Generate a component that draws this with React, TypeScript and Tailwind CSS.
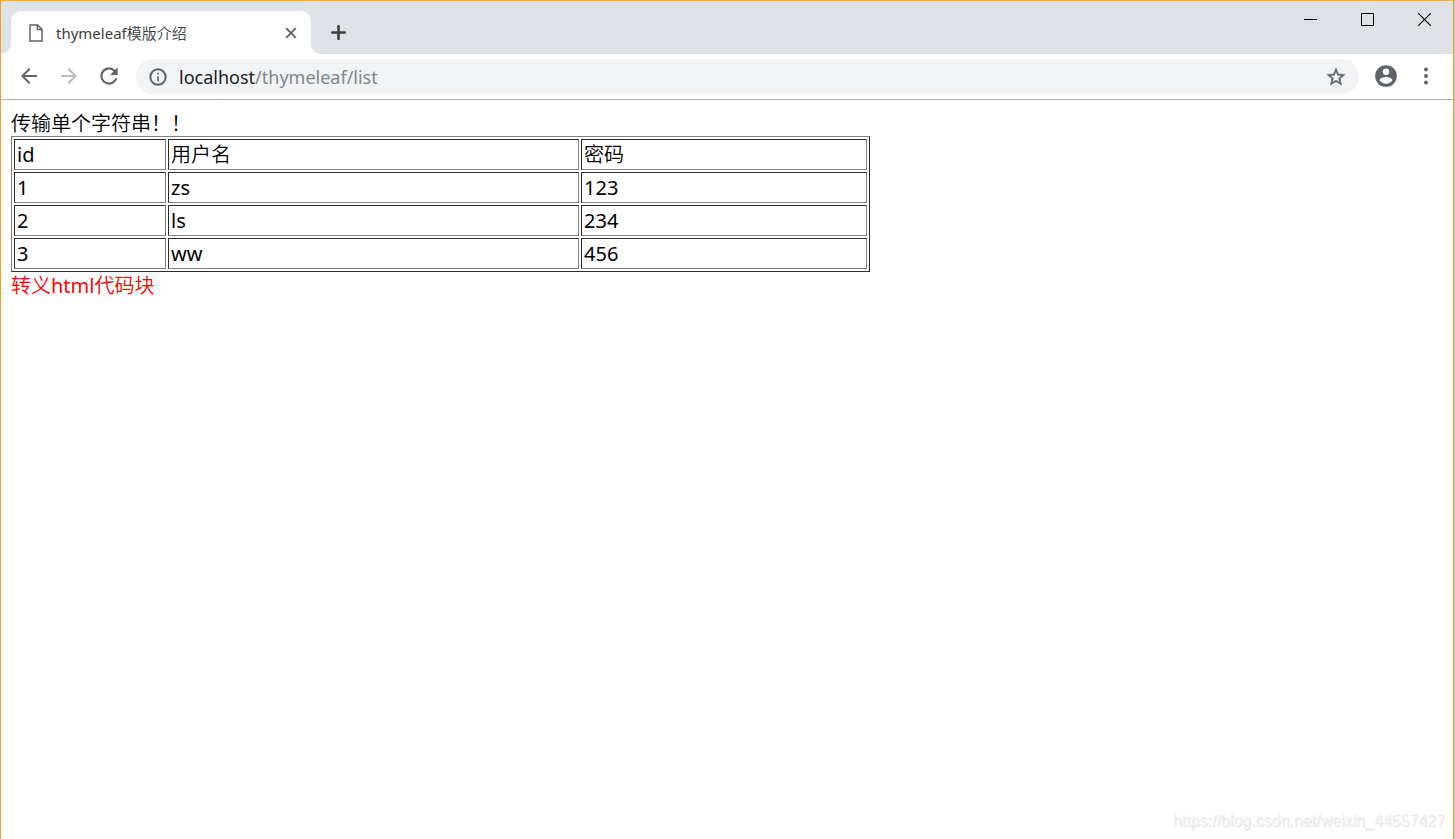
import React from "react";

const columns = ["id", "用户名", "密码"];
const rows = [
  ["1", "zs", "123"],
  ["2", "ls", "234"],
  ["3", "ww", "456"],
];

const cell =
  "border border-t-[#2c2c2c] border-l-[#2c2c2c] border-b-[#808080] border-r-[#808080] py-px px-0.5 text-left font-normal";

function TabStrip() {
  return (
    <header className="flex h-[53px] items-end bg-[#dee1e6]">
      <svg className="size-[10px]" viewBox="0 0 10 10" aria-hidden="true">
        <path d="M10 0v10H0A10 10 0 0 0 10 0z" fill="#fff" />
      </svg>
      <div className="flex h-[43px] w-[300px] items-center rounded-t-[10px] bg-white pr-3 pl-[18px]">
        <svg className="h-[18px] w-[14px]" viewBox="0 0 14 18" fill="none" stroke="#5f6368" strokeWidth="1.5" aria-hidden="true">
          <path d="M1 .9h7.6L13 5.3v11.8H1z" />
          <path d="M8.4 1v4.5H13" />
        </svg>
        <span className="ml-[13px] flex-1 text-[15px] leading-5 text-[#3c4043]">thymeleaf模版介绍</span>
        <button type="button" aria-label="关闭标签页" className="flex size-4 items-center justify-center">
          <svg className="size-3" viewBox="0 0 12 12" stroke="#5f6368" strokeWidth="1.9" aria-hidden="true">
            <path d="M1.2 1.2l9.6 9.6M10.8 1.2l-9.6 9.6" />
          </svg>
        </button>
      </div>
      <svg className="size-[10px]" viewBox="0 0 10 10" aria-hidden="true">
        <path d="M0 0v10h10A10 10 0 0 1 0 0z" fill="#fff" />
      </svg>
      <button type="button" aria-label="新标签页" className="flex h-[43px] w-[35px] items-center justify-center">
        <svg className="size-[15px]" viewBox="0 0 15 15" stroke="#3c4043" strokeWidth="2.6" strokeLinecap="round" aria-hidden="true">
          <path d="M7.5 1.2v12.6M1.2 7.5h12.6" />
        </svg>
      </button>
      <div className="ml-auto flex self-start">
        <button type="button" aria-label="最小化" className="flex h-[37px] w-[57px] items-center justify-center">
          <svg className="size-[13px]" viewBox="0 0 13 13" stroke="#000" aria-hidden="true">
            <path d="M0 6.5h13" />
          </svg>
        </button>
        <button type="button" aria-label="最大化" className="flex h-[37px] w-[57px] items-center justify-center">
          <svg className="size-[13px]" viewBox="0 0 13 13" stroke="#000" fill="none" aria-hidden="true">
            <path d="M.5 .5h12v12H.5z" />
          </svg>
        </button>
        <button type="button" aria-label="关闭" className="flex h-[37px] w-[57px] items-center justify-center">
          <svg className="size-[13px]" viewBox="0 0 13 13" stroke="#000" strokeWidth="1.1" aria-hidden="true">
            <path d="M.2 .2l12.6 12.6M12.8 .2L.2 12.8" />
          </svg>
        </button>
      </div>
    </header>
  );
}

function Toolbar() {
  return (
    <nav className="flex h-[46px] items-start border-b border-[#b1b3b4] bg-white pt-0.5 pr-[7px] pl-2">
      <button type="button" aria-label="后退" className="flex size-10 items-center justify-center text-[#5f6368]">
        <svg className="size-6" viewBox="0 0 24 24" fill="currentColor" aria-hidden="true">
          <path d="M20 11H7.83l5.59-5.59L12 4l-8 8 8 8 1.41-1.41L7.83 13H20v-2z" />
        </svg>
      </button>
      <button type="button" aria-label="前进" className="flex size-10 items-center justify-center text-[#babcbe]">
        <svg className="size-6" viewBox="0 0 24 24" fill="currentColor" aria-hidden="true">
          <path d="M12 4l-1.41 1.41L16.17 11H4v2h12.17l-5.58 5.59L12 20l8-8z" />
        </svg>
      </button>
      <button type="button" aria-label="重新加载" className="flex size-10 items-center justify-center text-[#5f6368]">
        <svg className="size-[26px]" viewBox="0 0 24 24" fill="currentColor" aria-hidden="true">
          <path d="M17.65 6.35A7.96 7.96 0 0 0 12 4a8 8 0 1 0 7.73 10h-2.08A6 6 0 1 1 12 6c1.66 0 3.14.69 4.22 1.78L13 11h7V4l-2.35 2.35z" />
        </svg>
      </button>
      <div className="mt-[3px] ml-[7px] flex h-[35px] flex-1 items-center rounded-full bg-[#f1f3f4] px-3">
        <svg className="size-5" viewBox="0 0 24 24" fill="#5f6368" aria-hidden="true">
          <path d="M11 7h2v2h-2zm0 4h2v6h-2zm1-9.4a10.4 10.4 0 1 0 0 20.8 10.4 10.4 0 0 0 0-20.8zm0 18.4a8 8 0 1 1 0-16 8 8 0 0 1 0 16z" />
        </svg>
        <a href="#list" className="ml-[11px] flex-1 text-[18px] leading-6 text-[#80868b]">
          <span className="text-[#202124]">localhost</span>/thymeleaf/list
        </a>
        <button type="button" aria-label="为此标签页添加书签" className="flex size-[22px] items-center justify-center">
          <svg className="size-[22px]" viewBox="0 0 24 24" fill="#5f6368" stroke="#5f6368" strokeWidth=".4" aria-hidden="true">
            <path d="M22 9.24l-7.19-.62L12 2 9.19 8.63 2 9.24l5.46 4.73L5.82 21 12 17.27 18.18 21l-1.63-7.03L22 9.24zM12 15.4l-3.76 2.27 1-4.28-3.32-2.88 4.38-.38L12 6.1l1.71 4.04 4.38.38-3.32 2.88 1 4.28L12 15.4z" />
          </svg>
        </button>
      </div>
      <button type="button" aria-label="用户" className="ml-[7px] flex size-10 items-center justify-center">
        <svg className="size-[26px]" viewBox="0 0 24 24" fill="#5f6368" aria-hidden="true">
          <path d="M12 2a10 10 0 1 0 0 20 10 10 0 0 0 0-20zm0 3a3 3 0 1 1 0 6 3 3 0 0 1 0-6zm0 14.2a7.2 7.2 0 0 1-6-3.22c.03-1.99 4-3.08 6-3.08 1.99 0 5.97 1.09 6 3.08a7.2 7.2 0 0 1-6 3.22z" />
        </svg>
      </button>
      <button type="button" aria-label="菜单" className="flex size-10 items-center justify-center">
        <svg className="size-6" viewBox="0 0 24 24" fill="#5f6368" aria-hidden="true">
          <circle cx="12" cy="5.6" r="2" />
          <circle cx="12" cy="12" r="2" />
          <circle cx="12" cy="18.4" r="2" />
        </svg>
      </button>
    </nav>
  );
}

export default function App() {
  return (
    <div className="min-h-screen bg-[#c9c9c9] pr-px font-['Noto_Sans','Noto_Sans_CJK_SC_DemiLight','Noto_Sans_CJK_SC',sans-serif]">
      <div className="relative flex min-h-screen flex-col border-x border-t border-[#f0a01e] border-t-[#efab48] bg-white">
        <TabStrip />
        <Toolbar />
        <main className="flex-1 p-[10px] text-[20px] leading-[27px] text-black">
          <p className="pt-0.5 leading-6">传输单个字符串！！</p>
          <table className="w-3/5 border-separate border-spacing-[2px] border border-t-[#808080] border-l-[#808080] border-b-[#2c2c2c] border-r-[#2c2c2c]">
            <thead>
              <tr>
                <th scope="col" className={`w-[17.9%] ${cell}`}>{columns[0]}</th>
                <th scope="col" className={`w-[48.4%] ${cell}`}>{columns[1]}</th>
                <th scope="col" className={cell}>{columns[2]}</th>
              </tr>
            </thead>
            <tbody>
              {rows.map((row) => (
                <tr key={row[0]}>
                  {row.map((value, i) => (
                    <td key={i} className={cell}>{value}</td>
                  ))}
                </tr>
              ))}
            </tbody>
          </table>
          <p className="pt-0.5 leading-6 text-[#ff0000]">转义html代码块</p>
        </main>
        <span className="absolute right-2 bottom-2 font-['Liberation_Sans',sans-serif] text-[16px] leading-5 text-[#f4f4f4] [text-shadow:1px_1px_1px_#dedede]">
          https://blog.csdn.net/weixin_44557427
        </span>
      </div>
    </div>
  );
}
